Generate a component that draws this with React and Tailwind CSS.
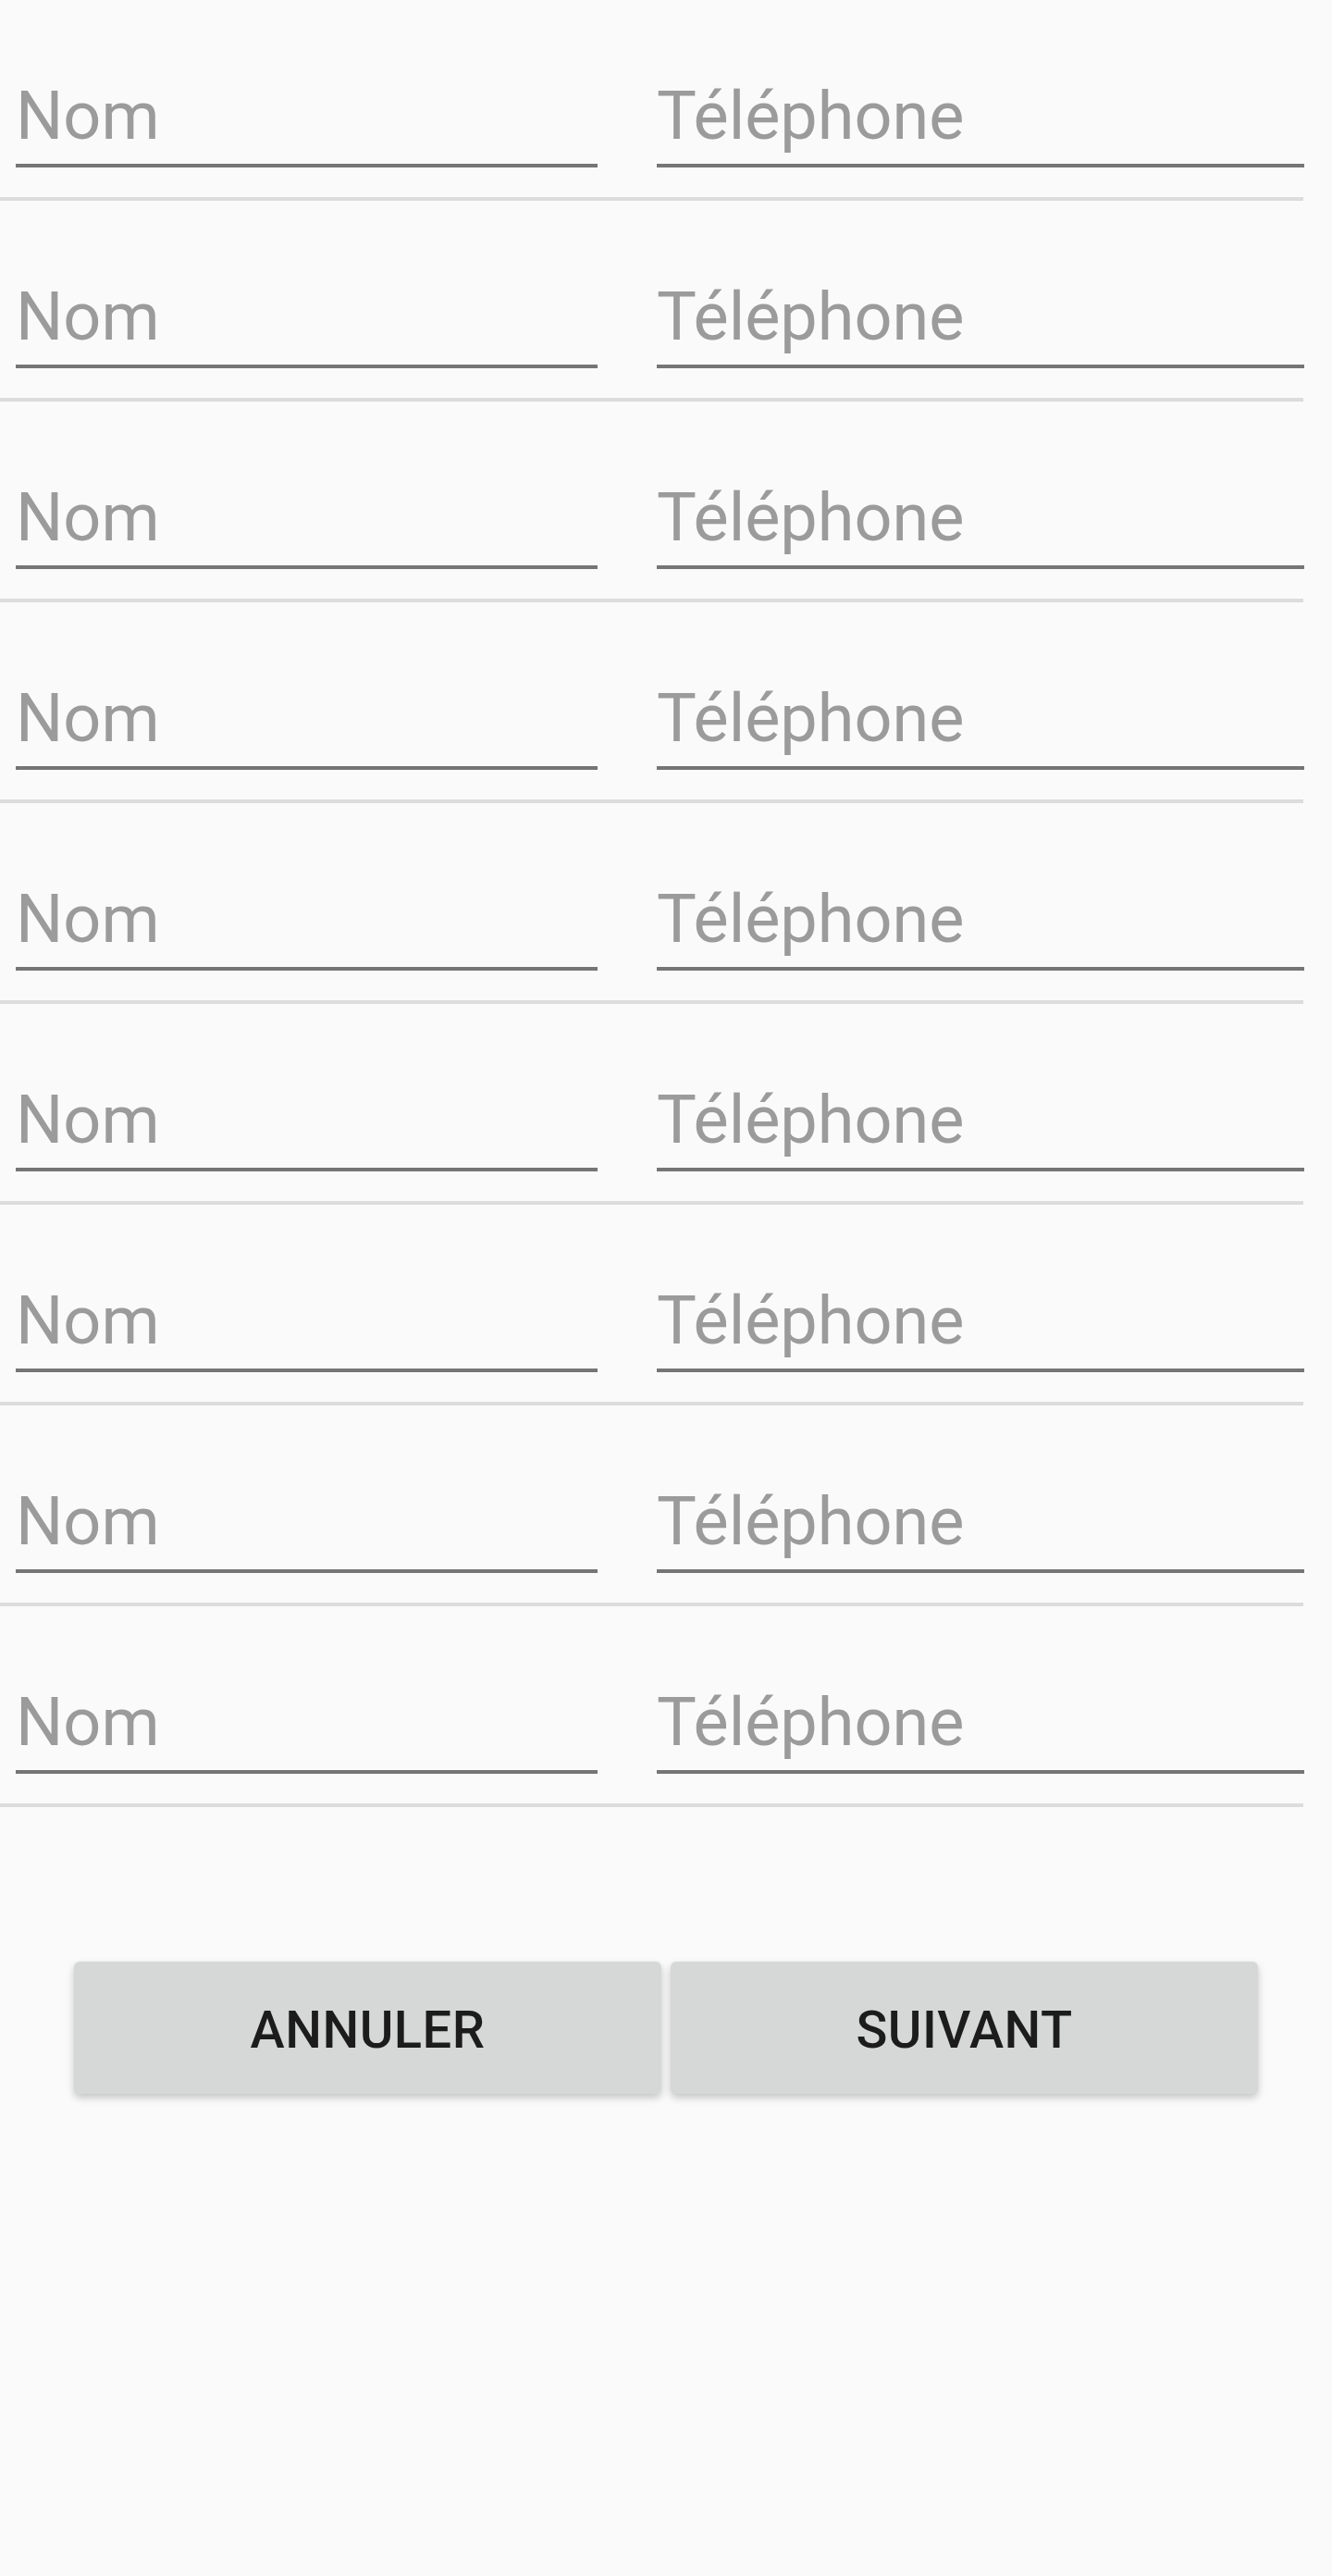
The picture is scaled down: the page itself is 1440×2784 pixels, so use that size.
import React from 'react';

const ROWS = 9;

const Field = ({ label, className }) => (
  <div className={className}>
    <div className="h-[84px] leading-[84px] text-[72px] text-[#9b9b9b] whitespace-nowrap">{label}</div>
    <div className="mt-[9px] h-[4px] bg-[#757575]" />
  </div>
);

const ContactRow = () => (
  <div>
    <div className="flex h-[213px] pt-[84px]">
      <Field label="Nom" className="ml-[17px] w-[629px]" />
      <Field label="Téléphone" className="ml-[64px] w-[700px]" />
    </div>
    <div className="h-[4px] w-[1409px] bg-[#dcdcdc]" />
  </div>
);

export default function App() {
  return (
    <div
      className="min-h-[2784px] w-[1440px] bg-[#fafafa]"
      style={{ fontFamily: 'Roboto, "Liberation Sans", sans-serif' }}
    >
      {Array.from({ length: ROWS }).map((_, i) => (
        <ContactRow key={i} />
      ))}

      <div className="mt-[167px] flex gap-[10px] px-[80px]">
        <button className="h-[143px] w-[635px] rounded-[6px] bg-[#d6d7d7] pt-[4px] text-[56px] font-medium tracking-[0.5px] text-[#1c1c1c] shadow-[0_4px_8px_rgba(0,0,0,0.22)]">
          ANNULER
        </button>
        <button className="h-[143px] w-[635px] rounded-[6px] bg-[#d6d7d7] pt-[4px] text-[56px] font-medium tracking-[0.5px] text-[#1c1c1c] shadow-[0_4px_8px_rgba(0,0,0,0.22)]">
          SUIVANT
        </button>
      </div>
    </div>
  );
}
